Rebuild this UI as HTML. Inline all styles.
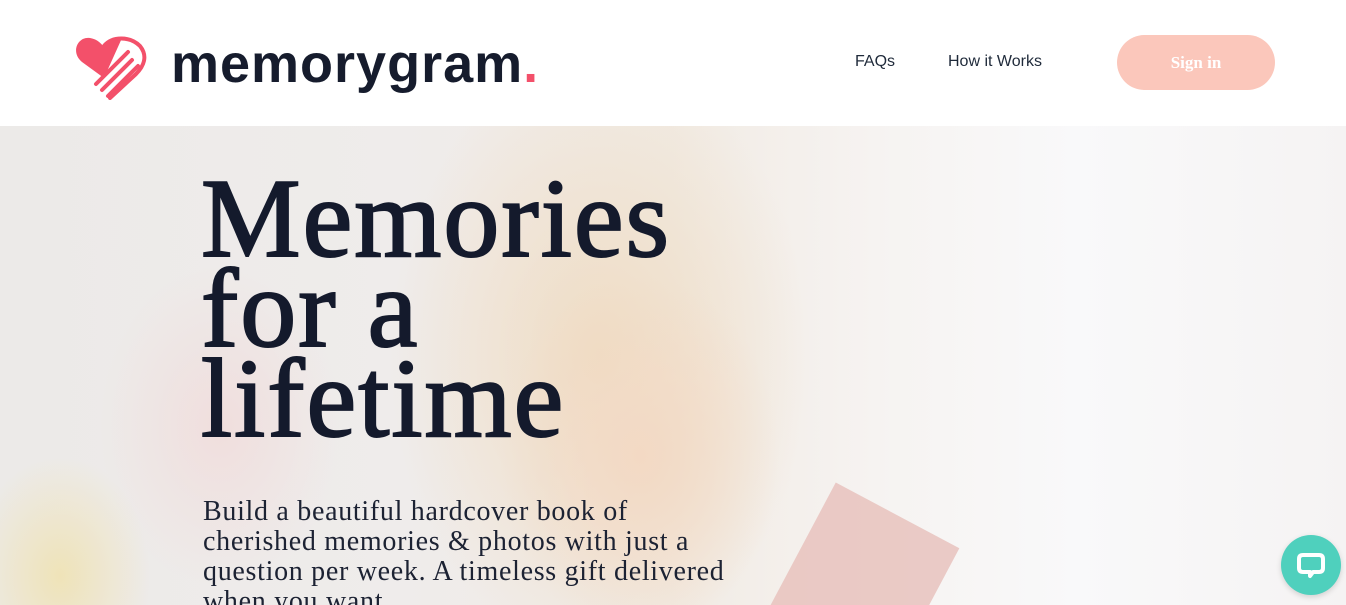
<!DOCTYPE html>
<html><head><meta charset="utf-8"><style>
*{margin:0;padding:0;box-sizing:border-box}
html,body{width:1346px;height:605px;overflow:hidden}
body{background:#fff;font-family:"Liberation Sans",sans-serif;position:relative}
header{position:absolute;top:0;left:0;width:1346px;height:126px;background:#fff}
.logo-text{position:absolute;left:171px;top:33px;font-size:54px;font-weight:bold;color:#161c2d;letter-spacing:1px;font-family:"Liberation Sans",sans-serif}
.logo-text span{color:#f3506a}
.nav{position:absolute;top:53px;font-size:16px;color:#1f2a3a}
.btn{position:absolute;left:1117px;top:35px;width:158px;height:55px;border-radius:28px;background:#fbc7bb;color:#fff;font-family:"Liberation Serif",serif;font-weight:bold;font-size:17px;text-align:center;line-height:55px}
.hero{position:absolute;top:126px;left:0;width:1346px;height:479px;overflow:hidden;
background:
radial-gradient(ellipse 140px 180px at 640px 330px,#f3d9c4 0%,rgba(243,217,196,0) 100%),
radial-gradient(ellipse 210px 300px at 600px 230px,#efdcc3 0%,rgba(239,220,195,0) 100%),
radial-gradient(ellipse 90px 120px at 60px 450px,#efe3b8 0%,rgba(239,227,184,0) 100%),
radial-gradient(ellipse 120px 160px at 220px 300px,#f0dedd 0%,rgba(240,222,221,0) 100%),
linear-gradient(90deg,#eceae8 0%,#efeceb 30%,#f1ebe4 50%,#f6f3f1 65%,#f9f9fa 80%,#f5f3f3 100%)}
.book{position:absolute;left:790px;top:380px;width:140px;height:160px;background:#e8c2bd;transform:rotate(28deg);opacity:.85}
h1{position:absolute;left:201px;top:174px;font-family:"Liberation Serif",serif;font-weight:normal;font-size:112px;line-height:90px;color:#141a2c;letter-spacing:2px;-webkit-text-stroke:2px #141a2c}
p{position:absolute;left:203px;top:497px;width:545px;font-family:"Liberation Serif",serif;font-size:28px;line-height:30px;color:#1c2233;letter-spacing:.7px}
.chat{position:absolute;left:1281px;top:535px;width:60px;height:60px;border-radius:50%;background:#4fd0bd;box-shadow:0 2px 6px rgba(0,0,0,.15)}
</style></head><body>
<div class="hero"><div class="book"></div></div>
<header>
<svg style="position:absolute;left:74px;top:36px" width="74" height="64" viewBox="0 0 74 64">
<path d="M30 42 L8 26 C-4 16 4 0 16 2 C22 3 26 6 29 10 C33 4 40 0 48 2 Z" fill="#f3506a"/>
<path d="M30 10 C38 0 56 0 66 10 C74 20 70 30 62 38 L36 62" fill="none" stroke="#f3506a" stroke-width="4" stroke-linecap="round"/>
<path d="M22 48 L54 16 M28 54 L58 24 M34 60 L64 30" stroke="#f3506a" stroke-width="4" stroke-linecap="round"/>
</svg>
<div class="logo-text">memorygram<span>.</span></div>
<div class="nav" style="left:855px">FAQs</div>
<div class="nav" style="left:948px">How it Works</div>
<div class="btn">Sign in</div>
</header>
<h1>Memories<br>for a<br>lifetime</h1>
<p>Build a beautiful hardcover book of cherished memories &amp; photos with just a question per week. A timeless gift delivered when you want.</p>
<div class="chat"><svg width="60" height="60" viewBox="0 0 60 60"><path d="M22 20 H38 Q42 20 42 24 V33 Q42 37 38 37 H32 L29 41 V37 H22 Q18 37 18 33 V24 Q18 20 22 20 Z" fill="none" stroke="#fff" stroke-width="4" stroke-linejoin="round"/></svg></div>
</body></html>
